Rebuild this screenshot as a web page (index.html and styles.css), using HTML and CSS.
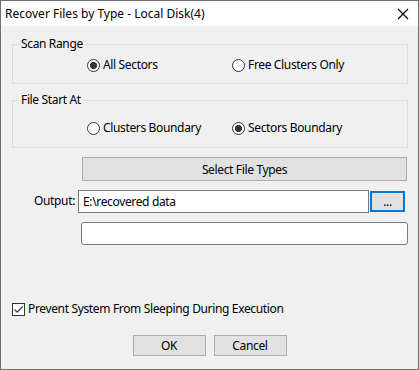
FILE: index.html
```html
<!DOCTYPE html>
<html lang="en">
<head>
    <meta charset="UTF-8">
    <title>Recover Files by Type</title>
    <link rel="stylesheet" href="styles.css">
</head>
<body>

<div class="window">
    <div class="titlebar">
        <span class="title">Recover Files by Type - Local Disk(4)</span>
        <svg class="close" width="12" height="12" viewBox="0 0 12 12">
            <path d="M1 1 L11 11 M11 1 L1 11" stroke="#000" stroke-width="1.1" fill="none"/>
        </svg>
    </div>

    <div class="content">
        <fieldset class="group first">
            <legend>Scan Range</legend>
            <div class="radios">
                <label class="radio"><input type="radio" name="range" checked> All Sectors</label>
                <label class="radio"><input type="radio" name="range"> Free Clusters Only</label>
            </div>
        </fieldset>

        <fieldset class="group second">
            <legend>File Start At</legend>
            <div class="radios">
                <label class="radio"><input type="radio" name="start"> Clusters Boundary</label>
                <label class="radio"><input type="radio" name="start" checked> Sectors Boundary</label>
            </div>
        </fieldset>

        <button class="btn wide">Select File Types</button>

        <div class="output-row">
            <label for="output" class="out-label">Output:</label>
            <input type="text" id="output" class="field" value="E:\recovered data">
            <button class="btn browse">...</button>
        </div>

        <div class="status-row">
            <input type="text" class="field status">
        </div>

        <label class="check">
            <span class="box">
                <svg width="11" height="11" viewBox="0 0 11 11">
                    <path d="M1.5 5.5 L4.2 8.2 L9.5 2.5" stroke="#333" stroke-width="1.2" fill="none"/>
                </svg>
            </span>
            Prevent System From Sleeping During Execution
        </label>

        <div class="actions">
            <button class="btn action">OK</button>
            <button class="btn action">Cancel</button>
        </div>
    </div>
</div>

</body>
</html>
```

FILE: styles.css
```css
* {
    box-sizing: border-box;
}

body {
    margin: 0;
    font-family: "Noto Sans", sans-serif;
    font-size: 12px;
    color: #000;
}

.window {
    width: 419px;
    height: 370px;
    border: 1px solid #707070;
    background: #f0f0f0;
    display: flex;
    flex-direction: column;
}

.titlebar {
    height: 25px;
    background: #fff;
    display: flex;
    align-items: center;
    padding: 0 9px 0 4px;
}

.title {
    flex: 1;
    line-height: 16px;
}

.close {
    margin-top: 1px;
}

.content {
    display: flex;
    flex-direction: column;
    padding: 0 10px 0 11px;
    letter-spacing: -0.35px;
}

.group {
    border: 1px solid #dcdcdc;
    margin: 0;
    padding: 5px 0 10px 6px;
    min-width: 0;
}

.group legend {
    padding: 0 2px;
    line-height: 16px;
}

.first {
    margin-top: 10px;
}

.second {
    margin-top: 8px;
    padding-top: 12px;
    padding-bottom: 11px;
}

.radios {
    display: flex;
    padding-left: 68px;
    line-height: 16px;
}

.radio {
    display: flex;
    align-items: center;
    width: 145px;
}

.radio input {
    appearance: none;
    width: 13px;
    height: 13px;
    margin: 0 3px 0 0;
    border: 1px solid #333;
    border-radius: 50%;
    background: #fff;
}

.radio input:checked {
    background: radial-gradient(circle, #333 0 3.3px, #fff 3.8px);
}

.btn {
    font: inherit;
    letter-spacing: inherit;
    color: #000;
    background: #e1e1e1;
    border: 1px solid #adadad;
    padding: 0;
}

.wide {
    margin: 9px 1px 0 70px;
    height: 24px;
}

.output-row {
    display: flex;
    align-items: center;
    margin-top: 9px;
}

.out-label {
    width: 66px;
    text-align: right;
    padding-right: 3px;
    margin-top: -2px;
}

.field {
    font: inherit;
    letter-spacing: inherit;
    color: #000;
    background: #fff;
    border: 1px solid #7a7a7a;
    height: 23px;
    padding: 0 4px;
    outline: none;
}

#output {
    width: 291px;
}

.browse {
    width: 35px;
    height: 21px;
    margin-left: 1px;
    border: 2px solid #0078d7;
    line-height: 10px;
}

.status-row {
    display: flex;
    margin-top: 9px;
    padding-left: 69px;
}

.status {
    flex: 1;
    border-radius: 3px;
}

.check {
    display: flex;
    align-items: center;
    margin-top: 56px;
    line-height: 16px;
}

.box {
    width: 13px;
    height: 13px;
    border: 1px solid #333;
    background: #fff;
    margin-right: 3px;
    display: flex;
}

.actions {
    display: flex;
    justify-content: center;
    gap: 8px;
    margin-top: 18px;
    padding-right: 1px;
}

.action {
    width: 73px;
    height: 21px;
}
```
